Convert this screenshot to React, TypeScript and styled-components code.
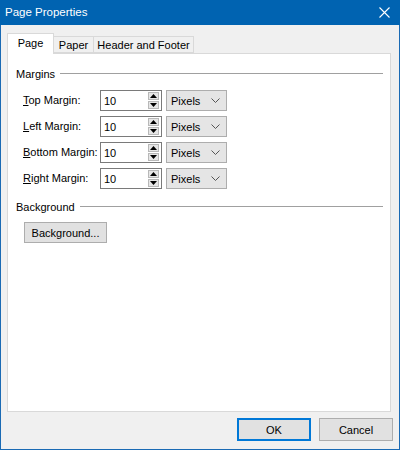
import React from "react";
import styled, { createGlobalStyle } from "styled-components";

const Global = createGlobalStyle`
  html, body { margin: 0; padding: 0; background: #ffffff; }
  * { box-sizing: border-box; }
  body { font-family: "Liberation Sans", Arial, sans-serif; font-size: 11px; color: #000; }
`;

const Window = styled.div`
  width: 400px;
  height: 450px;
  display: flex;
  flex-direction: column;
  background: #f0f0f0;
  border: 1px solid #1a6ab4;
  border-top: none;
`;

const TitleBar = styled.div`
  height: 25px;
  margin: 0 -1px;
  background: #0063b1;
  color: #fff;
  display: flex;
  align-items: center;
  justify-content: space-between;
  padding: 0 10px 1px 5px;
  font-size: 11.5px;
`;

const CloseBtn = styled.svg`
  width: 11px;
  height: 11px;
  display: block;
`;

const Body = styled.div`
  flex: 1;
  display: flex;
  flex-direction: column;
  padding: 8px 8px 0 6px;
`;

const TabRow = styled.div`
  display: flex;
  align-items: flex-end;
  height: 20px;
  position: relative;
  z-index: 1;
`;

const Tab = styled.div<{ $active?: boolean; $w: number }>`
  width: ${(p) => p.$w}px;
  height: ${(p) => (p.$active ? "21px" : "17px")};
  margin-bottom: ${(p) => (p.$active ? "-1px" : "0")};
  margin-left: -1px;
  padding-bottom: ${(p) => (p.$active ? "2px" : "0")};
  display: flex;
  align-items: center;
  justify-content: center;
  background: ${(p) => (p.$active ? "#ffffff" : "#f0f0f0")};
  border: 1px solid #d9d9d9;
  border-bottom: ${(p) => (p.$active ? "none" : "1px solid #d9d9d9")};
  &:first-child { margin-left: 0; }
`;

const Panel = styled.div`
  flex: 1;
  background: #fff;
  border: 1px solid #d9d9d9;
  padding: 12px 7px 0 8px;
  display: flex;
  flex-direction: column;
`;

const GroupHeader = styled.div`
  display: flex;
  align-items: center;
  height: 15px;
  gap: 5px;
`;

const GroupLine = styled.div`
  flex: 1;
  height: 1px;
  background: #a0a0a0;
`;

const Grid = styled.div`
  display: grid;
  grid-template-columns: 73px 62px 61px;
  column-gap: 4px;
  row-gap: 5px;
  margin: 9px 0 0 7px;
  align-items: center;
`;

const Label = styled.div`
  line-height: 21px;
  white-space: nowrap;
`;

const SpinBox = styled.div`
  height: 21px;
  border: 1px solid #7a7a7a;
  background: #fff;
  display: flex;
  align-items: center;
  padding: 0 2px 0 3px;
`;

const SpinValue = styled.span`
  flex: 1;
`;

const SpinButtons = styled.div`
  display: flex;
  flex-direction: column;
  gap: 1px;
`;

const SpinBtn = styled.div`
  width: 11px;
  height: 8px;
  background: #e6e6e6;
  border: 1px solid #b8b8b8;
  display: flex;
  align-items: center;
  justify-content: center;
`;

const Select = styled.div`
  height: 21px;
  background: #e5e5e5;
  border: 1px solid #adadad;
  display: flex;
  align-items: center;
  justify-content: space-between;
  padding: 0 6px 0 4px;
`;

const Chevron = styled.svg`
  width: 9px;
  height: 5px;
  display: block;
`;

const BgHeader = styled(GroupHeader)`
  margin-top: 10px;
`;

const Button = styled.div<{ $primary?: boolean }>`
  height: 21px;
  display: flex;
  align-items: center;
  justify-content: center;
  background: #e1e1e1;
  border: ${(p) => (p.$primary ? "2px solid #0078d7" : "1px solid #adadad")};
`;

const BgButton = styled(Button)`
  width: 83px;
  margin: 8px 0 0 8px;
`;

const Footer = styled.div`
  height: 37px;
  display: flex;
  justify-content: flex-end;
  gap: 8px;
  padding: 6px 0 8px 0;
  margin-right: -2px;
`;

const FooterButton = styled(Button)`
  width: 74px;
  height: 23px;
`;

const Up = () => (
  <svg width="7" height="4" viewBox="0 0 7 4"><path d="M3.5 0 L7 4 L0 4 Z" fill="#000" /></svg>
);
const Down = () => (
  <svg width="7" height="4" viewBox="0 0 7 4"><path d="M0 0 L7 0 L3.5 4 Z" fill="#000" /></svg>
);

const rows: [string, string][] = [
  ["T", "op Margin:"],
  ["L", "eft Margin:"],
  ["B", "ottom Margin:"],
  ["R", "ight Margin:"],
];

export default function App() {
  return (
    <>
      <Global />
      <Window>
        <TitleBar>
          <span>Page Properties</span>
          <CloseBtn viewBox="0 0 11 11">
            <path d="M0.5 0.5 L10.5 10.5 M10.5 0.5 L0.5 10.5" stroke="#fff" strokeWidth="1.1" />
          </CloseBtn>
        </TitleBar>
        <Body>
          <TabRow>
            <Tab $active $w={47}>Page</Tab>
            <Tab $w={41}>Paper</Tab>
            <Tab $w={101}>Header and Footer</Tab>
          </TabRow>
          <Panel>
            <GroupHeader>
              <span>Margins</span>
              <GroupLine />
            </GroupHeader>
            <Grid>
              {rows.map(([k, rest]) => (
                <React.Fragment key={k}>
                  <Label><u>{k}</u>{rest}</Label>
                  <SpinBox>
                    <SpinValue>10</SpinValue>
                    <SpinButtons>
                      <SpinBtn><Up /></SpinBtn>
                      <SpinBtn><Down /></SpinBtn>
                    </SpinButtons>
                  </SpinBox>
                  <Select>
                    <span>Pixels</span>
                    <Chevron viewBox="0 0 9 5">
                      <path d="M0.5 0.5 L4.5 4.5 L8.5 0.5" stroke="#555" fill="none" strokeWidth="1" />
                    </Chevron>
                  </Select>
                </React.Fragment>
              ))}
            </Grid>
            <BgHeader>
              <span>Background</span>
              <GroupLine />
            </BgHeader>
            <BgButton>Background...</BgButton>
          </Panel>
          <Footer>
            <FooterButton $primary>OK</FooterButton>
            <FooterButton>Cancel</FooterButton>
          </Footer>
        </Body>
      </Window>
    </>
  );
}
